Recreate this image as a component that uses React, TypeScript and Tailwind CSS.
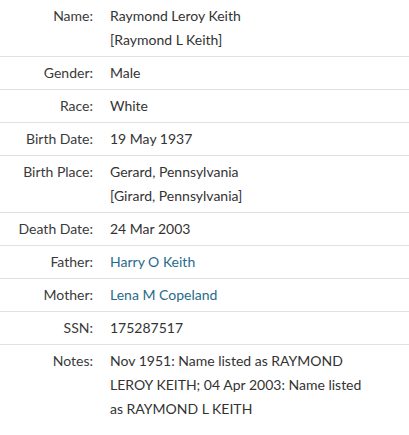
const rows: { label: string; lines: string[]; link?: boolean }[] = [
  { label: "Name:", lines: ["Raymond Leroy Keith", "[Raymond L Keith]"] },
  { label: "Gender:", lines: ["Male"] },
  { label: "Race:", lines: ["White"] },
  { label: "Birth Date:", lines: ["19 May 1937"] },
  { label: "Birth Place:", lines: ["Gerard, Pennsylvania", "[Girard, Pennsylvania]"] },
  { label: "Death Date:", lines: ["24 Mar 2003"] },
  { label: "Father:", lines: ["Harry O Keith"], link: true },
  { label: "Mother:", lines: ["Lena M Copeland"], link: true },
  { label: "SSN:", lines: ["175287517"] },
  {
    label: "Notes:",
    lines: ["Nov 1951: Name listed as RAYMOND LEROY KEITH; 04 Apr 2003: Name listed as RAYMOND L KEITH"],
  },
];

export default function App() {
  return (
    <div className="min-h-screen bg-white font-['Lato',sans-serif] text-[14px] leading-6 text-[#333]">
      {rows.map((row, i) => (
        <div
          key={row.label}
          className={`flex py-1 ${i < rows.length - 1 ? "border-b border-[#e1e1e1]" : ""}`}
        >
          <div className="w-[93px] shrink-0 text-right text-[#3a3a3a]">{row.label}</div>
          <div className="w-[277px] pl-[17px]">
            {row.lines.map((line) => (
              <div key={line} className={row.link ? "text-[#1f6b8c]" : ""}>
                {line}
              </div>
            ))}
          </div>
        </div>
      ))}
    </div>
  );
}
